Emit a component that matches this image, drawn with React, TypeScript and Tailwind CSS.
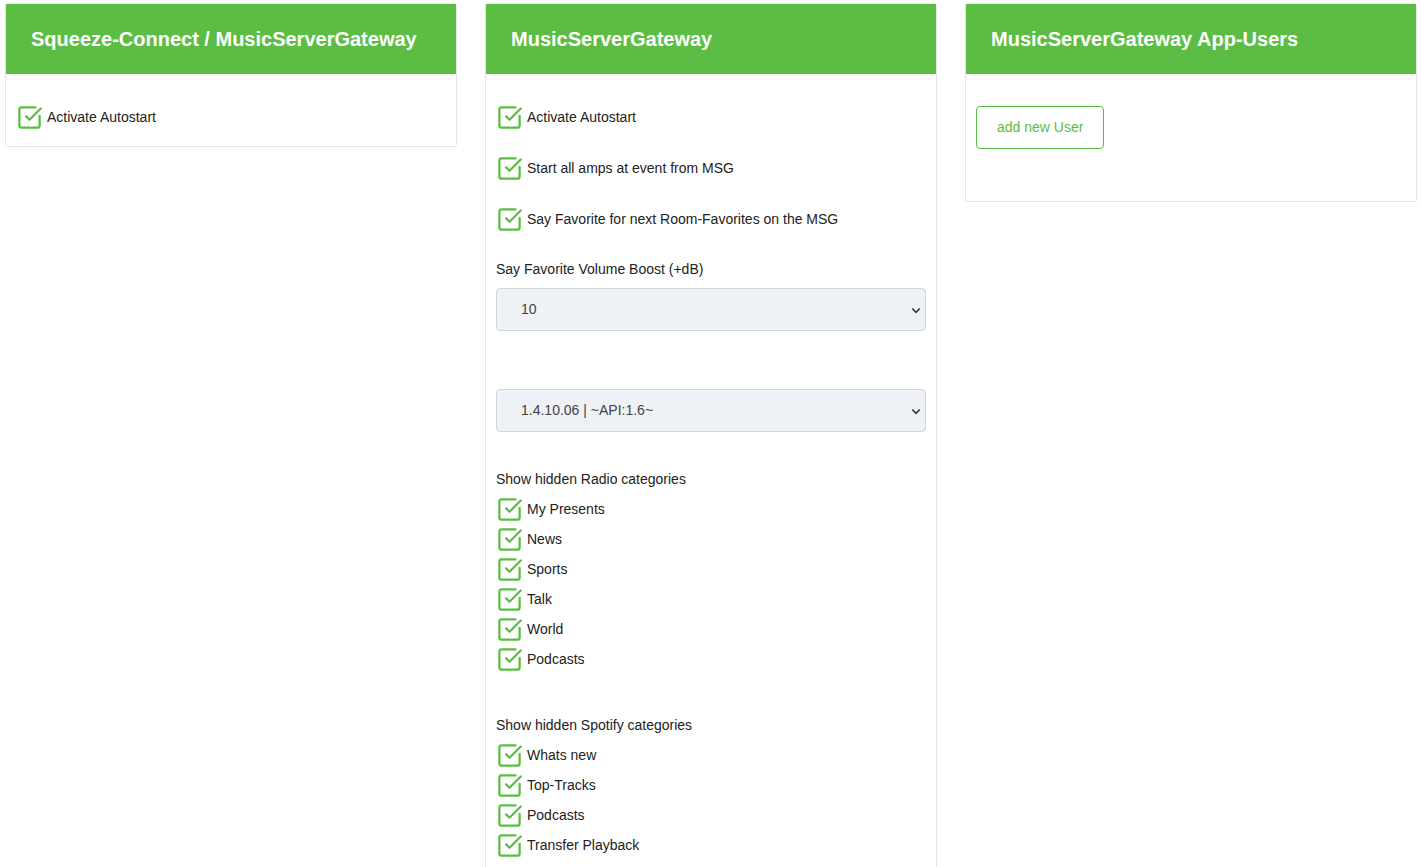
import { SquareCheckBig } from 'lucide-react';

const GREEN = 'text-[#5bbd43]';

const Check = ({ label }: { label: string }) => (
  <div className="flex items-center gap-[4px] h-[30px]">
    <SquareCheckBig className={`h-[27px] w-[27px] ${GREEN}`} strokeWidth={2} />
    <span className="text-[14px] text-[#222]">{label}</span>
  </div>
);

const Card = ({ title, children }: { title: string; children: React.ReactNode }) => (
  <div className="w-[452px] border border-[#e3e5e8] rounded-[3px] bg-white self-start">
    <div className="h-[70px] bg-[#5bbd43] flex items-center px-[25px]">
      <h2 className="text-white font-bold text-[20px]">{title}</h2>
    </div>
    <div className="px-[10px]">{children}</div>
  </div>
);

const Select = ({ value }: { value: string }) => (
  <div className="relative">
    <select
      defaultValue={value}
      className="w-full h-[43px] appearance-none rounded-[4px] border border-[#ced4da] bg-[#eef1f5] pl-[24px] text-[14px] text-[#444]"
    >
      <option>{value}</option>
    </select>
    <svg className="absolute right-[4px] top-[16px] h-[12px] w-[12px] text-[#333]" viewBox="0 0 16 16" fill="none">
      <path d="M3 6l5 5 5-5" stroke="currentColor" strokeWidth="2.2" />
    </svg>
  </div>
);

export default function App() {
  const radio = ['My Presents', 'News', 'Sports', 'Talk', 'World', 'Podcasts'];
  const spotify = ['Whats new', 'Top-Tracks', 'Podcasts', 'Transfer Playback'];
  return (
    <div
      className="min-h-[867px] bg-white flex gap-[28px] pl-[5px] pt-[3px]"
      style={{ fontFamily: '"Liberation Sans", Arial, sans-serif' }}
    >
      <Card title="Squeeze-Connect / MusicServerGateway">
        <div className="pt-[28px] pb-[14px]">
          <Check label="Activate Autostart" />
        </div>
      </Card>

      <Card title="MusicServerGateway">
        <div className="pt-[28px] flex flex-col gap-[21px]">
          <Check label="Activate Autostart" />
          <Check label="Start all amps at event from MSG" />
          <Check label="Say Favorite for next Room-Favorites on the MSG" />
        </div>
        <div className="mt-[25px] text-[14px] text-[#222]">Say Favorite Volume Boost (+dB)</div>
        <div className="mt-[8px]">
          <Select value="10" />
        </div>
        <div className="mt-[58px]">
          <Select value="1.4.10.06 | ~API:1.6~" />
        </div>
        <div className="mt-[37px] text-[14px] text-[#222]">Show hidden Radio categories</div>
        <div className="mt-[4px] flex flex-col">
          {radio.map((r) => (
            <Check key={r} label={r} />
          ))}
        </div>
        <div className="mt-[41px] text-[14px] text-[#222]">Show hidden Spotify categories</div>
        <div className="mt-[4px] flex flex-col pb-[20px]">
          {spotify.map((r) => (
            <Check key={r} label={r} />
          ))}
        </div>
      </Card>

      <Card title="MusicServerGateway App-Users">
        <div className="pt-[32px] pb-[52px]">
          <button className="h-[43px] px-[20px] border border-[#5bbd43] rounded-[4px] text-[#5bbd43] text-[14px] bg-white">
            add new User
          </button>
        </div>
      </Card>
    </div>
  );
}
